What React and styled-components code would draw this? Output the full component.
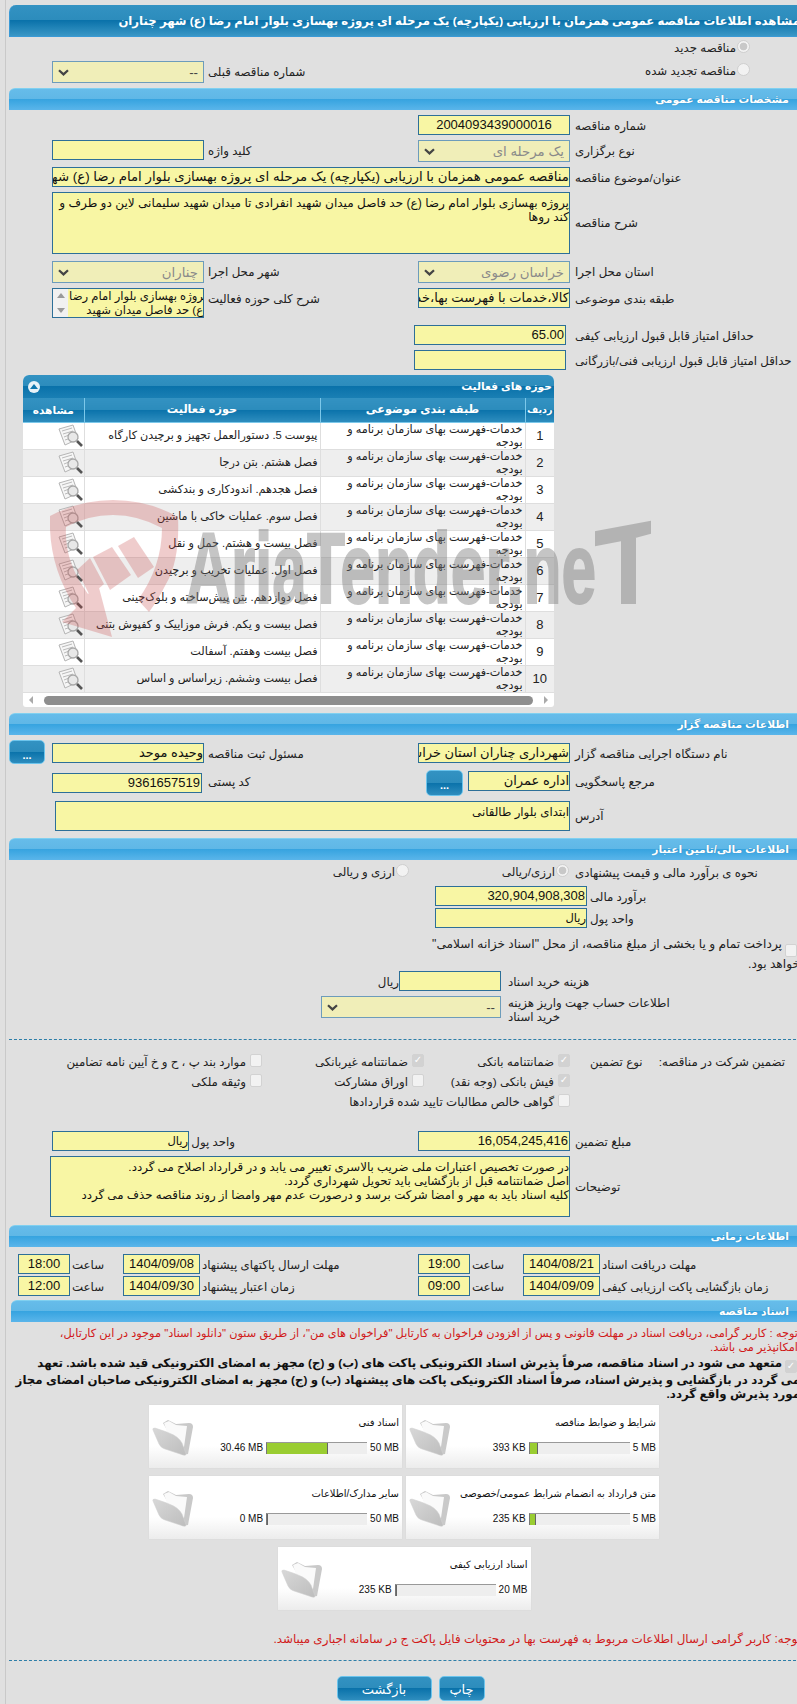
import styled, { createGlobalStyle } from "styled-components";

const activities = [
    "پیوست 5. دستورالعمل تجهیز و برچیدن کارگاه",
    "فصل هشتم. بتن درجا",
    "فصل هجدهم. اندودکاری و بندکشی",
    "فصل سوم. عملیات خاکی با ماشین",
    "فصل بیست و هشتم. حمل و نقل",
    "فصل اول. عملیات تخریب و برچیدن",
    "فصل دوازدهم. بتن پیش‌ساخته و بلوک‌چینی",
    "فصل بیست و یکم. فرش موزاییک و کفپوش بتنی",
    "فصل بیست وهفتم. آسفالت",
    "فصل بیست وششم. زیراساس و اساس",
];

const docs = [
    { title: "شرایط و ضوابط مناقصه", max: "5 MB", used: "393 KB", pct: 8 },
    { title: "اسناد فنی", max: "50 MB", used: "30.46 MB", pct: 61 },
    { title: "متن قرارداد به انضمام شرایط عمومی/خصوصی", max: "5 MB", used: "235 KB", pct: 6 },
    { title: "سایر مدارک/اطلاعات", max: "50 MB", used: "0 MB", pct: 0 },
    { title: "اسناد ارزیابی کیفی", max: "20 MB", used: "235 KB", pct: 1 },
];

const ChevronIcon = () => (
    <svg width="11" height="7" viewBox="0 0 11 7">
        <path d="M1 1.2 L5.5 5.4 L10 1.2" fill="none" stroke="#444" strokeWidth="2.2" />
    </svg>
);

const ViewIcon = () => (
    <svg width="26" height="24" viewBox="0 0 26 24">
        <path d="M1 5 L15 1 L20 15 L7 21 Z" fill="#f6f6f6" stroke="#b5b5b5" />
        <path d="M4 7 L14 4 M5 10 L15 7 M6 13 L11 11 M7 16 L10 15" stroke="#bbb" fill="none" />
        <circle cx="15" cy="13" r="5" fill="#e8e8e8" stroke="#a8a8a8" strokeWidth="1.3" />
        <path d="M19 17 L24 22" stroke="#555" strokeWidth="2.6" />
    </svg>
);

const FolderIcon = () => (
    <svg width="42" height="37" viewBox="0 0 42 37">
        <defs>
            <linearGradient id="folderFront" x1="0" y1="0" x2="1" y2="1">
                <stop offset="0" stopColor="#d8d8d8" />
                <stop offset="1" stopColor="#bdbdbd" />
            </linearGradient>
        </defs>
        <path d="M11 4 L16 1 L24 5 L37 4 Q41 4 41 8 L36 35 L30 36 Z" fill="#c9c9c9" />
        <path d="M12 4 L17 2 L24 6 L35 7 L32 28 L18 22 Z" fill="#fafafa" />
        <path d="M1 11 Q0 9 3 9 L12 12 Q15 13 17 14 Q26 17 30 24 L34 35 Q34 37 31 36 L13 30 Q9 29 7 25 Z" fill="url(#folderFront)" stroke="#d0d0d0" strokeWidth=".5" />
    </svg>
);

const Logo = () => (
    <svg width="610" height="140" viewBox="0 0 610 140">
        <g fill="#c84848" opacity=".27">
            <path fillRule="evenodd" d="M0 16 Q30 0 63 0 Q98 0 128 17 Q130 60 116 84 Q108 100 99 112 L88 100 Q112 66 112 28 Q88 15 63 15 Q38 15 16 27 Q14 62 38 94 L48 84 L62 137 L12 122 L26 108 Q-2 66 0 16 Z" />
            <path d="M27 70 L40 58 L54 84 L40 96 Z" />
            <path d="M43 57 L62 47 L81 75 L60 90 Z" />
            <path d="M68 46 L84 37 L104 67 L88 78 Z" />
        </g>
        <g fill="#777" stroke="#777" strokeWidth="2" opacity=".42" fontFamily="'Liberation Sans Narrow','Liberation Sans',sans-serif" fontWeight="700">
            <text x="136" y="103" fontSize="100" textLength="410" lengthAdjust="spacingAndGlyphs">AriaTender.ne</text>
            <path d="M546 32 L600 22 L600 33 L585 37 L585 103 L572 103 L572 40 L546 45 Z" />
        </g>
    </svg>
);

const Card = ({ title, max, used, pct }) => (
    <DocCard>
        <DocBody>
            <DocTitle>{title}</DocTitle>
            <DocMeter>
                <DocSize>{max}</DocSize>
                <MeterTrack>
                    <MeterFill style={{ width: `${pct}%` }} />
                </MeterTrack>
                <DocSize>{used}</DocSize>
            </DocMeter>
        </DocBody>
        <FolderIcon />
    </DocCard>
);

function App() {
    return (
        <>
            <GlobalStyle />
            <Root>
                <Frame>
                    <Sheet>
                        <TitleBar>مشاهده اطلاعات مناقصه عمومی همزمان با ارزیابی (یکپارچه) یک مرحله ای پروژه بهسازی بلوار امام رضا (ع) شهر چناران</TitleBar>

                        <Row $top={1} $h={20} $cols="56px 1fr">
                            <span />
                            <Choice><Radio $on />مناقصه جدید</Choice>
                        </Row>
                        <Row $top={3} $h={22} $cols="231px 255px 112px 199px">
                            <Choice $inset={56}><Radio />مناقصه تجدید شده</Choice>
                            <span />
                            <Label>شماره مناقصه قبلی</Label>
                            <Select $w={152} $inset={4}><span>--</span><ChevronIcon /></Select>
                        </Row>

                        <SectionBar $top={5}>مشخصات مناقصه عمومی</SectionBar>

                        <Row $top={5} $h={20}>
                            <Label>شماره مناقصه</Label>
                            <Field $w={152} $num $align="center">2004093439000016</Field>
                        </Row>
                        <Row $top={5} $h={22}>
                            <Label>نوع برگزاری</Label>
                            <Select $w={152} $muted><span>یک مرحله ای</span><ChevronIcon /></Select>
                            <Label>کلید واژه</Label>
                            <Field $w={152} $inset={4} />
                        </Row>
                        <Row $top={5} $h={20} $cols="231px 1fr">
                            <Label>عنوان/موضوع مناقصه</Label>
                            <Field $w={518} $size={13.3}>مناقصه عمومی همزمان با ارزیابی (یکپارچه) یک مرحله ای پروژه بهسازی بلوار امام رضا (ع) شهر چناران</Field>
                        </Row>
                        <Row $top={5} $h={62} $cols="231px 1fr">
                            <Label $center>شرح مناقصه</Label>
                            <TextBox $w={518} $h={62} $size={12.1}>
                                پروژه بهسازی بلوار امام رضا (ع) حد فاصل میدان شهید انفرادی تا میدان شهید سلیمانی لاین دو طرف و<br />
                                کند روها
                            </TextBox>
                        </Row>
                        <Row $top={7} $h={22}>
                            <Label>استان محل اجرا</Label>
                            <Select $w={152} $muted><span>خراسان رضوی</span><ChevronIcon /></Select>
                            <Label>شهر محل اجرا</Label>
                            <Select $w={152} $inset={4} $muted><span>چناران</span><ChevronIcon /></Select>
                        </Row>
                        <Row $top={5} $h={30}>
                            <Label>طبقه بندی موضوعی</Label>
                            <Field $w={152}>کالا،خدمات با فهرست بها،خدمات</Field>
                            <Label>شرح کلی حوزه فعالیت</Label>
                            <ListBox $inset={4}>
                                <ListText>پروژه بهسازی بلوار امام رضا (ع) حد فاصل میدان شهید</ListText>
                                <ListArrows>
                                    <ArrowUp />
                                    <ArrowDown />
                                </ListArrows>
                            </ListBox>
                        </Row>
                        <Row $top={7} $h={20} $cols="231px 1fr">
                            <Label>حداقل امتیاز قابل قبول ارزیابی کیفی</Label>
                            <Field $w={152} $inset={9} $num>65.00</Field>
                        </Row>
                        <Row $top={5} $h={20} $cols="231px 1fr">
                            <Label>حداقل امتیاز قابل قبول ارزیابی فنی/بازرگانی</Label>
                            <Field $w={152} $inset={9} />
                        </Row>

                        <GridPanel>
                            <GridTitle>
                                <span>حوزه های فعالیت</span>
                                <Collapse>
                                    <svg width="8" height="5" viewBox="0 0 8 5"><path d="M4 0 L8 5 L0 5 Z" fill="#0f76ad" /></svg>
                                </Collapse>
                            </GridTitle>
                            <GridTable>
                                <thead>
                                    <tr>
                                        <HeadCell $w={29} $size={9.6}>ردیف</HeadCell>
                                        <HeadCell $w={205}>طبقه بندی موضوعی</HeadCell>
                                        <HeadCell $w={236}>حوزه فعالیت</HeadCell>
                                        <HeadCell $w={61} $size={10.6}>مشاهده</HeadCell>
                                    </tr>
                                </thead>
                                <tbody>
                                    {activities.map((name, i) => (
                                        <GridRow key={name} $odd={i % 2 === 1}>
                                            <IndexCell>{i + 1}</IndexCell>
                                            <TextCell>خدمات-فهرست بهای سازمان برنامه و بودجه</TextCell>
                                            <TextCell>{name}</TextCell>
                                            <IconCell><ViewIcon /></IconCell>
                                        </GridRow>
                                    ))}
                                </tbody>
                            </GridTable>
                            <ScrollTrack>
                                <ScrollRight />
                                <ScrollThumb />
                                <ScrollLeft />
                            </ScrollTrack>
                        </GridPanel>

                        <SectionBar $top={6}>اطلاعات مناقصه گزار</SectionBar>

                        <Row $top={8} $h={20}>
                            <Label>نام دستگاه اجرایی مناقصه گزار</Label>
                            <Field $w={152}>شهرداری چناران استان خراسان رضوی</Field>
                            <Label>مسئول ثبت مناقصه</Label>
                            <FieldGroup $gap={7} $inset={4}>
                                <Field $w={152} $inset={0}>وحیده موحد</Field>
                                <DotsButton $w={36} $h={24} $shift={-3}>...</DotsButton>
                            </FieldGroup>
                        </Row>
                        <Row $top={8} $h={22}>
                            <Label>مرجع پاسخگویی</Label>
                            <FieldGroup $inset={5}>
                                <Field $w={102} $inset={0}>اداره عمران</Field>
                                <DotsButton $w={37} $h={26} $shift={-1}>...</DotsButton>
                            </FieldGroup>
                            <Label>کد پستی</Label>
                            <Field $w={150} $inset={6} $num $shift={2}>9361657519</Field>
                        </Row>
                        <Row $top={8} $h={30} $cols="231px 1fr">
                            <Label $center>آدرس</Label>
                            <TextBox $w={515} $h={30}>ابتدای بلوار طالقانی</TextBox>
                        </Row>

                        <SectionBar $top={7}>اطلاعات مالی/تامین اعتبار</SectionBar>

                        <Row $top={2} $h={20} $cols="231px 166px 1fr">
                            <Label>نحوه ی برآورد مالی و قیمت پیشنهادی</Label>
                            <Choice $inset={6}><Radio $on />ارزی/ریالی</Choice>
                            <Choice><Radio />ارزی و ریالی</Choice>
                        </Row>
                        <Row $top={4} $h={20} $cols="216px 1fr">
                            <Label>برآورد مالی</Label>
                            <Field $w={152} $inset={3} $num>320,904,908,308</Field>
                        </Row>
                        <Row $top={2} $h={20} $cols="216px 1fr">
                            <Label>واحد پول</Label>
                            <Field $w={152} $inset={3} $size={11.5}>ریال</Field>
                        </Row>
                        <Notice>
                            <Check $inline />پرداخت تمام و یا بخشی از مبلغ مناقصه، از محل "اسناد خزانه اسلامی"<br />
                            خواهد بود.
                        </Notice>
                        <Row $top={4} $h={20} $cols="298px 1fr">
                            <Label>هزینه خرید اسناد</Label>
                            <FieldGroup $gap={0} $inset={7}>
                                <Field $w={102} $inset={0} />
                                <Label>ریال</Label>
                            </FieldGroup>
                        </Row>
                        <Row $top={5} $h={22} $cols="298px 1fr">
                            <WrapLabel>اطلاعات حساب جهت واریز هزینه خرید اسناد</WrapLabel>
                            <Select $w={180} $inset={7}><span>--</span><ChevronIcon /></Select>
                        </Row>

                        <Dashed $top={21} />

                        <GuaranteeGrid>
                            <GuaranteeHead>
                                <span>تضمین شرکت در مناقصه:</span>
                                <span>نوع تضمین</span>
                            </GuaranteeHead>
                            <Choice><Check $on /><span>ضمانتنامه بانکی</span></Choice>
                            <Choice><Check $on /><span>ضمانتنامه غیربانکی</span></Choice>
                            <Choice><Check /><span>موارد بند پ ، ح و خ آیین نامه تضامین</span></Choice>
                            <span />
                            <Choice><Check $on /><span>فیش بانکی (وجه نقد)</span></Choice>
                            <Choice><Check /><span>اوراق مشارکت</span></Choice>
                            <Choice><Check /><span>وثیقه ملکی</span></Choice>
                            <span />
                            <Choice $wide><Check /><span>گواهی خالص مطالبات تایید شده قراردادها</span></Choice>
                        </GuaranteeGrid>

                        <Row $top={19} $h={20} $cols="231px 340px 43px 1fr">
                            <Label>مبلغ تضمین</Label>
                            <Field $w={152} $num>16,054,245,416</Field>
                            <Label>واحد پول</Label>
                            <Field $w={137} $inset={3} $size={11.5}>ریال</Field>
                        </Row>
                        <Row $top={5} $h={61} $cols="231px 1fr">
                            <Label $center>توضیحات</Label>
                            <TextBox $w={520} $h={61}>
                                در صورت تخصیص اعتبارات ملی ضریب بالاسری تغییر می یابد و در قرارداد اصلاح می گردد.<br />
                                اصل ضمانتنامه قبل از بازگشایی باید تحویل شهرداری گردد.<br />
                                کلیه اسناد باید به مهر و امضا شرکت برسد و درصورت عدم مهر وامضا از روند مناقصه حذف می گردد
                            </TextBox>
                        </Row>

                        <SectionBar $top={8}>اطلاعات زمانی</SectionBar>

                        <TimeRow $top={7}>
                            <Label>مهلت دریافت اسناد</Label>
                            <Field $w={77} $num $inset={2} $align="center">1404/08/21</Field>
                            <Label>ساعت</Label>
                            <Field $w={52} $num $inset={2} $align="center">19:00</Field>
                            <Label>مهلت ارسال پاکتهای پیشنهاد</Label>
                            <Field $w={77} $num $inset={2} $align="center">1404/09/08</Field>
                            <Label>ساعت</Label>
                            <Field $w={52} $num $inset={2} $align="center">18:00</Field>
                        </TimeRow>
                        <TimeRow $top={2}>
                            <Label>زمان بازگشایی پاکت ارزیابی کیفی</Label>
                            <Field $w={77} $num $inset={2} $align="center">1404/09/09</Field>
                            <Label>ساعت</Label>
                            <Field $w={52} $num $inset={2} $align="center">09:00</Field>
                            <Label>زمان اعتبار پیشنهاد</Label>
                            <Field $w={77} $num $inset={2} $align="center">1404/09/30</Field>
                            <Label>ساعت</Label>
                            <Field $w={52} $num $inset={2} $align="center">12:00</Field>
                        </TimeRow>

                        <SectionBar $top={4} $indent={2}>اسناد مناقصه</SectionBar>

                        <RedNote $top={4}>
                            توجه : کاربر گرامی، دریافت اسناد در مهلت قانونی و پس از افزودن فراخوان به کارتابل "فراخوان های من"، از طریق ستون "دانلود اسناد" موجود در این کارتابل،<br />
                            امکانپذیر می باشد.
                        </RedNote>
                        <BoldNote>
                            <Check $on $inline />متعهد می شود در اسناد مناقصه، صرفاً پذیرش اسناد الکترونیکی پاکت های (ب) و (ج) مجهز به امضای الکترونیکی قید شده باشد. تعهد<br />
                            می گردد در بازگشایی و پذیرش اسناد، صرفاً اسناد الکترونیکی پاکت های پیشنهاد (ب) و (ج) مجهز به امضای الکترونیکی صاحبان امضای مجاز<br />
                            مورد پذیرش واقع گردد.
                        </BoldNote>

                        <DocGrid>
                            {docs.map((doc) => <Card key={doc.title} {...doc} />)}
                        </DocGrid>

                        <RedNote $top={22} $size={11.9} $pad={5}>توجه: کاربر گرامی ارسال اطلاعات مربوط به فهرست بها در محتویات فایل پاکت ج در سامانه اجباری میباشد.</RedNote>

                        <Dashed $top={14} />

                        <Actions>
                            <ActionButton $w={46}>چاپ</ActionButton>
                            <ActionButton $w={95}>بازگشت</ActionButton>
                        </Actions>
                    </Sheet>
                </Frame>
                <Watermark><Logo /></Watermark>
            </Root>
        </>
    );
}

export default App;

const font = `"Liberation Sans", "DejaVu Sans", sans-serif`;

const GlobalStyle = createGlobalStyle`
    html, body {
        margin: 0;
        padding: 0;
        background: #e0e0e0;
        overflow-x: hidden;
    }
    * {
        box-sizing: border-box;
    }
`;

const Root = styled.div`
    position: relative;
    width: 797px;
    height: 1704px;
    overflow: hidden;
    padding-left: 5px;
    font-family: ${font};
    font-size: 11.8px;
    color: #222;
`;

const Frame = styled.div`
    height: 100%;
    width: 900px;
    border-left: 1px solid #c9c9c9;
    padding: 5px 0 0 3px;
`;

const Sheet = styled.div`
    width: 797px;
    direction: rtl;
`;

const Watermark = styled.div`
    position: absolute;
    left: 50px;
    top: 500px;
    pointer-events: none;
`;

const TitleBar = styled.div`
    height: 32px;
    line-height: 32px;
    padding-right: 5px;
    border-radius: 7px 0 0 0;
    border: 1px solid #3a9ad6;
    border-width: 0 1px 1px 1px;
    background: linear-gradient(#3392c2 0, #2c8cbc 50%, #0a72aa 50%, #3a97c6 100%);
    color: #fff;
    font-weight: bold;
    font-size: 11.7px;
    white-space: nowrap;
`;

const SectionBar = styled.div`
    height: 22px;
    line-height: 21px;
    margin-top: ${(p) => p.$top}px;
    margin-left: ${(p) => p.$indent || 0}px;
    padding-right: 17px;
    border-radius: 6px 0 0 0;
    border-top: 1px solid #80d0f0;
    background: linear-gradient(#66bcea 0, #5fb7e6 50%, #37a4e0 50%, #5ab5ea 100%);
    color: #fff;
    font-weight: bold;
    font-size: 10.7px;
    text-shadow: 0 0 1px #2a7fb0;
`;

const Row = styled.div`
    display: grid;
    grid-template-columns: ${(p) => p.$cols || "231px 255px 112px 199px"};
    align-items: start;
    height: ${(p) => p.$h}px;
    margin-top: ${(p) => p.$top}px;
`;

const TimeRow = styled.div`
    display: grid;
    grid-template-columns: 204px 79px 51px 54px 216px 79px 51px 54px;
    height: 20px;
    margin-top: ${(p) => p.$top}px;
`;

const Label = styled.label`
    text-align: left;
    line-height: 22px;
    white-space: nowrap;
    align-self: ${(p) => (p.$center ? "center" : "start")};
`;

const WrapLabel = styled.label`
    text-align: left;
    line-height: 14px;
    width: 163px;
    justify-self: end;
    direction: rtl;
`;

const Field = styled.div`
    width: ${(p) => p.$w}px;
    height: 20px;
    flex: none;
    margin-right: ${(p) => p.$inset ?? 5}px;
    margin-top: ${(p) => p.$shift || 0}px;
    border: 1px solid #2d6f98;
    background: #f8f6a4;
    overflow: hidden;
    white-space: nowrap;
    line-height: 18px;
    font-size: ${(p) => p.$size || 13}px;
    text-align: ${(p) => p.$align || "right"};
    padding: ${(p) => (p.$num && !p.$align ? "0 1px" : "0")};
    color: #111;
`;

const TextBox = styled.div`
    width: ${(p) => p.$w}px;
    height: ${(p) => p.$h}px;
    margin-right: 5px;
    border: 1px solid #2d6f98;
    background: #f8f6a4;
    overflow: hidden;
    line-height: 14px;
    font-size: ${(p) => p.$size || 11.8}px;
    padding-top: 3px;
    color: #111;
`;

const Select = styled.div`
    width: ${(p) => p.$w}px;
    height: 22px;
    margin-right: ${(p) => p.$inset ?? 5}px;
    border: 1px solid #6d9cbb;
    background: #f0eeb8;
    display: flex;
    align-items: center;
    justify-content: space-between;
    padding: 0 5px;
    font-size: 13.3px;
    color: ${(p) => (p.$muted ? "#8a8a8a" : "#444")};
`;

const ListBox = styled.div`
    width: 152px;
    height: 30px;
    margin-right: ${(p) => p.$inset}px;
    border: 1px solid #2d6f98;
    background: #f8f6a4;
    display: flex;
    overflow: hidden;
`;

const ListText = styled.div`
    flex: 1;
    line-height: 14px;
    font-size: 11.6px;
    overflow: hidden;
    color: #111;
    margin-right: -4px;
`;

const ListArrows = styled.div`
    width: 15px;
    background: #f1f1f1;
    display: flex;
    flex-direction: column;
    align-items: center;
    justify-content: space-between;
    padding: 4px 0;
`;

const ArrowUp = styled.span`
    border: 4px solid transparent;
    border-bottom: 5px solid #9a9a9a;
    border-top: 0;
`;

const ArrowDown = styled.span`
    border: 4px solid transparent;
    border-top: 5px solid #9a9a9a;
    border-bottom: 0;
`;

const Choice = styled.div`
    display: flex;
    align-items: center;
    gap: 1px;
    height: 20px;
    white-space: nowrap;
    margin-right: ${(p) => p.$inset || 0}px;
    grid-column: ${(p) => (p.$wide ? "span 2" : "auto")};
    line-height: 20px;
`;

const Radio = styled.span`
    width: 13px;
    height: 13px;
    flex: none;
    margin-top: -3px;
    border-radius: 50%;
    border: 1px solid #cfcfcf;
    background: ${(p) => (p.$on ? "radial-gradient(circle, #c8c8c8 0 3.5px, #f2f2f2 4.2px)" : "#f2f2f2")};
`;

const Check = styled.span`
    width: 12px;
    height: 13px;
    flex: none;
    display: ${(p) => (p.$inline ? "inline-flex" : "flex")};
    vertical-align: ${(p) => (p.$inline ? "-2px" : "baseline")};
    align-items: center;
    justify-content: center;
    margin: ${(p) => (p.$inline ? "-4px 3px 0 3px" : "-4px 0 0 3px")};
    border-radius: 2px;
    border: 1px solid #d2d2d2;
    background: ${(p) => (p.$on ? "#d2d2d2" : "#f2f2f2")};
    &::before {
        content: ${(p) => (p.$on ? '"✓"' : '""')};
        color: #fff;
        font-size: 10px;
        line-height: 1;
        font-family: "DejaVu Sans", sans-serif;
    }
`;

const FieldGroup = styled.div`
    display: flex;
    gap: ${(p) => p.$gap ?? 5}px;
    align-items: flex-start;
    margin-right: ${(p) => p.$inset || 0}px;
`;

const DotsButton = styled.div`
    width: ${(p) => p.$w}px;
    height: ${(p) => p.$h}px;
    margin-top: ${(p) => p.$shift}px;
    flex: none;
    border: 1px solid #6cc4ec;
    border-radius: 5px;
    background: linear-gradient(#3392c2 0, #2c8cbc 50%, #0a72aa 50%, #2e8dbe 100%);
    color: #fff;
    font-weight: bold;
    font-size: 11px;
    line-height: 28px;
    text-align: center;
    overflow: hidden;
`;

const GridPanel = styled.div`
    width: 531px;
    margin: 5px 252px 0 0;
    height: 332px;
    background: #fff;
    border-radius: 6px 6px 3px 3px;
    overflow: hidden;
`;

const GridTitle = styled.div`
    height: 23px;
    padding: 0 2px 0 5px;
    display: flex;
    align-items: center;
    justify-content: space-between;
    background: linear-gradient(#3392c2 0, #2c8cbc 50%, #0a72aa 50%, #1a7fb4 100%);
    color: #fff;
    font-weight: bold;
    font-size: 10.7px;
`;

const Collapse = styled.span`
    width: 12px;
    height: 12px;
    border-radius: 50%;
    background: #e8f2f8;
    display: flex;
    align-items: center;
    justify-content: center;
`;

const GridTable = styled.table`
    width: 531px;
    border-collapse: collapse;
    table-layout: fixed;
    font-size: 11.2px;
`;

const HeadCell = styled.th`
    width: ${(p) => p.$w}px;
    height: 24px;
    padding: 0;
    border-left: 1px solid #7cc8ea;
    border-bottom: 1px solid #7cc8ea;
    background: linear-gradient(#3392c2 0, #2c8cbc 50%, #0a72aa 50%, #2e8dbe 100%);
    color: #fff;
    font-size: ${(p) => p.$size || 11.3}px;
    font-weight: bold;
    white-space: nowrap;
    &:last-child {
        border-left: 0;
    }
`;

const GridRow = styled.tr`
    height: 27px;
    background: ${(p) => (p.$odd ? "#eeeeee" : "#fff")};
    td {
        border-left: 1px solid #dedede;
        border-bottom: 1px solid #dedede;
        padding: 0;
    }
    td:last-child {
        border-left: 0;
    }
`;

const IndexCell = styled.td`
    text-align: center;
    font-size: 13px;
`;

const TextCell = styled.td`
    line-height: 13px;
    padding: 0 2px 0 2px !important;
    color: #222;
`;

const IconCell = styled.td`
    text-align: left;
    svg {
        display: block;
        margin: 0 0 0 34px;
    }
`;

const ScrollTrack = styled.div`
    height: 15px;
    display: flex;
    align-items: center;
    justify-content: space-between;
    padding: 0 6px;
`;

const ScrollThumb = styled.div`
    width: 489px;
    height: 9px;
    border-radius: 5px;
    background: #8e8e8e;
`;

const ScrollRight = styled.span`
    border: 4px solid transparent;
    border-left: 4px solid #aaa;
    border-right: 0;
`;

const ScrollLeft = styled.span`
    border: 4px solid transparent;
    border-right: 4px solid #aaa;
    border-left: 0;
`;

const Notice = styled.div`
    margin-top: 9px;
    line-height: 15px;
    height: 30px;
    white-space: nowrap;
    padding-right: 6px;
    font-size: 12.2px;
`;

const Dashed = styled.div`
    margin-top: ${(p) => p.$top}px;
    border-top: 1px dashed #2d7ea8;
`;

const GuaranteeGrid = styled.div`
    display: grid;
    grid-template-columns: 236px 146px 162px 1fr;
    grid-auto-rows: 20px;
    margin-top: 12px;
`;

const GuaranteeHead = styled.div`
    display: flex;
    justify-content: space-between;
    padding: 0 21px 0 20px;
    line-height: 20px;
    white-space: nowrap;
`;

const RedNote = styled.div`
    margin-top: ${(p) => p.$top}px;
    color: #d11a1a;
    font-size: ${(p) => p.$size || 11.35}px;
    line-height: 14px;
    padding-right: ${(p) => p.$pad ?? 8}px;
    white-space: nowrap;
`;

const BoldNote = styled.div`
    margin-top: 2px;
    font-weight: bold;
    line-height: 14px;
    white-space: nowrap;
    color: #111;
    padding-right: 6px;
`;

const DocGrid = styled.div`
    width: 510px;
    margin: 4px 147px 0 0;
    display: flex;
    flex-wrap: wrap;
    justify-content: center;
    gap: 8px 4px;
`;

const DocCard = styled.div`
    width: 253px;
    height: 63px;
    padding: 11px 3px 0 3px;
    display: flex;
    justify-content: space-between;
    background: linear-gradient(#fff 0, #fff 65%, #ececec 100%);
    box-shadow: 0 0 1px #cfcfcf;
    svg {
        margin-top: 3px;
    }
`;

const DocBody = styled.div`
    display: flex;
    flex-direction: column;
    gap: 12px;
    font-size: 10px;
`;

const DocTitle = styled.div`
    line-height: 14px;
    color: #111;
`;

const DocMeter = styled.div`
    display: flex;
    align-items: center;
    gap: 3px;
`;

const DocSize = styled.span`
    font-size: 10px;
    direction: ltr;
    white-space: nowrap;
    color: #111;
`;

const MeterTrack = styled.div`
    width: 101px;
    height: 12px;
    background: #eeeeee;
    border-top: 1px solid #999;
    border-left: 1px solid #777;
    display: flex;
    direction: ltr;
`;

const MeterFill = styled.div`
    background: #9acd32;
    border-right: 1px solid #666;
`;

const Actions = styled.div`
    display: flex;
    justify-content: center;
    gap: 7px;
    margin-top: 15px;
    padding-left: 6px;
`;

const ActionButton = styled.div`
    width: ${(p) => p.$w}px;
    height: 25px;
    border: 1px solid #6cc4ec;
    border-radius: 5px;
    background: linear-gradient(#3392c2 0, #2c8cbc 50%, #0a72aa 50%, #2e8dbe 100%);
    color: #fff;
    font-size: 13px;
    text-align: center;
    line-height: 25px;
`;
